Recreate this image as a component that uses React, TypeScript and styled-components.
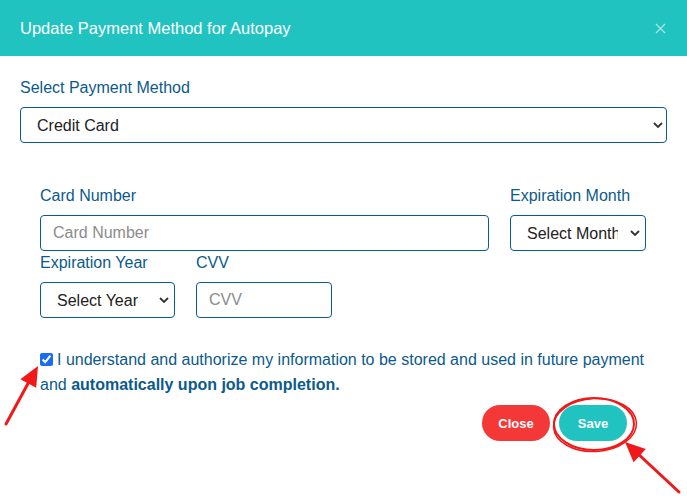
import React, { useState } from 'react';
import styled, { createGlobalStyle } from 'styled-components';

const GlobalStyle = createGlobalStyle`
  html, body {
    margin: 0;
    padding: 0;
    background: #fff;
  }
  body {
    font-family: 'Liberation Sans', Arial, sans-serif;
  }
  * {
    box-sizing: border-box;
  }
`;

const TEAL = '#21c3c1';
const BLUE = '#0b5a8c';

const Modal = styled.div`
  position: relative;
  width: 687px;
  min-height: 501px;
  background: #fff;
`;

const Header = styled.div`
  height: 56px;
  background: ${TEAL};
  display: flex;
  align-items: center;
  justify-content: space-between;
  padding: 0 21px 0 20px;
`;

const Title = styled.h5`
  margin: 0;
  font-size: 16.5px;
  font-weight: 400;
  color: #fff;
`;

const CloseX = styled.button`
  border: 0;
  background: none;
  padding: 0;
  width: 12px;
  height: 12px;
  display: flex;
  align-items: center;
  justify-content: center;
  cursor: pointer;
`;

const Body = styled.div`
  padding: 23px 20px 0;
`;

const Label = styled.label`
  display: block;
  font-size: 16px;
  line-height: 18px;
  color: ${BLUE};
  margin-bottom: 10px;
`;

const SelectWrap = styled.div`
  position: relative;
  width: 100%;
`;

const Select = styled.select<{ $padRight?: number }>`
  appearance: none;
  -webkit-appearance: none;
  width: 100%;
  height: 36px;
  border: 1px solid ${BLUE};
  border-radius: 4px;
  background: #fff;
  font-family: inherit;
  font-size: 16px;
  color: #222;
  padding: 0 ${(p) => p.$padRight ?? 28}px 0 16px;
  outline: none;
`;

const Chevron = styled.svg<{ $right: number }>`
  position: absolute;
  top: 50%;
  right: ${(p) => p.$right}px;
  margin-top: -3px;
  pointer-events: none;
`;

const Input = styled.input`
  width: 100%;
  height: 36px;
  border: 1px solid ${BLUE};
  border-radius: 4px;
  font-family: inherit;
  font-size: 16px;
  color: #222;
  padding: 0 12px;
  outline: none;
  &::placeholder {
    color: #8c8c8c;
  }
`;

const CardSection = styled.div`
  margin-top: 44px;
  padding: 0 20px;
`;

const Row = styled.div`
  display: flex;
  gap: 21px;
`;

const Col = styled.div<{ $width: number }>`
  width: ${(p) => p.$width}px;
  flex: none;
  margin-bottom: 3px;
`;

const Consent = styled.p`
  margin: 26px 0 0;
  font-size: 16px;
  line-height: 25px;
  color: ${BLUE};
  width: 610px;

  input {
    margin: 0 4px 0 0;
    width: 13px;
    height: 13px;
    vertical-align: -1px;
    accent-color: #1a6cf0;
  }
`;

const Actions = styled.div`
  display: flex;
  justify-content: flex-end;
  gap: 9px;
  margin-top: 8px;
  padding-right: 40px;
`;

const Button = styled.button<{ $variant: 'close' | 'save' }>`
  width: 68px;
  height: 36px;
  border: 0;
  border-radius: 18px;
  background: ${(p) => (p.$variant === 'close' ? '#f43838' : TEAL)};
  color: #fff;
  font-family: inherit;
  font-weight: 700;
  font-size: 13px;
  cursor: pointer;
`;

const Annotations = styled.svg`
  position: absolute;
  left: 0;
  top: 0;
  pointer-events: none;
`;

const Caret = ({ right }: { right: number }) => (
  <Chevron $right={right} width="10" height="6" viewBox="0 0 10 6">
    <path d="M1 1l4 4 4-4" fill="none" stroke="#333" strokeWidth="1.8" />
  </Chevron>
);

const months = ['January', 'February', 'March', 'April', 'May', 'June', 'July', 'August', 'September', 'October', 'November', 'December'];
const years = Array.from({ length: 10 }, (_, i) => String(2024 + i));

const App = () => {
  const [agree, setAgree] = useState(true);

  return (
    <Modal>
      <GlobalStyle />
      <Header>
        <Title>Update Payment Method for Autopay</Title>
        <CloseX aria-label="close">
          <svg width="11" height="11" viewBox="0 0 11 11">
            <path d="M1 1l9 9M10 1l-9 9" stroke="rgba(255,255,255,0.6)" strokeWidth="1.4" />
          </svg>
        </CloseX>
      </Header>
      <Body>
        <Label>Select Payment Method</Label>
        <SelectWrap>
          <Select defaultValue="card" $padRight={24}>
            <option value="card">Credit Card</option>
            <option value="ach">Bank Account</option>
          </Select>
          <Caret right={4} />
        </SelectWrap>

        <CardSection>
          <Row>
            <Col $width={449}>
              <Label>Card Number</Label>
              <Input placeholder="Card Number" />
            </Col>
            <Col $width={136}>
              <Label>Expiration Month</Label>
              <SelectWrap>
                <Select defaultValue="" $padRight={27}>
                  <option value="">Select Month</option>
                  {months.map((m) => (
                    <option key={m}>{m}</option>
                  ))}
                </Select>
                <Caret right={6} />
              </SelectWrap>
            </Col>
          </Row>
          <Row>
            <Col $width={135}>
              <Label>Expiration Year</Label>
              <SelectWrap>
                <Select defaultValue="">
                  <option value="">Select Year</option>
                  {years.map((y) => (
                    <option key={y}>{y}</option>
                  ))}
                </Select>
                <Caret right={6} />
              </SelectWrap>
            </Col>
            <Col $width={136}>
              <Label>CVV</Label>
              <Input placeholder="CVV" />
            </Col>
          </Row>

          <Consent>
            <input type="checkbox" checked={agree} onChange={(e) => setAgree(e.target.checked)} />
            I understand and authorize my information to be stored and used in future payment and{' '}
            <b>automatically upon job completion.</b>
          </Consent>
        </CardSection>

        <Actions>
          <Button $variant="close">Close</Button>
          <Button $variant="save">Save</Button>
        </Actions>
      </Body>

      {/* red hand-drawn markup over the screenshot */}
      <Annotations width="687" height="501" viewBox="0 0 687 501">
        <g fill="none" stroke="#f01818" strokeLinecap="round">
          <ellipse cx="594" cy="424" rx="40" ry="26" strokeWidth="2" />
          <ellipse cx="595" cy="425" rx="41.5" ry="26.5" strokeWidth="1.5" transform="rotate(-3 595 425)" />
          <line x1="6" y1="424" x2="31" y2="378" strokeWidth="3" />
          <line x1="679" y1="492" x2="636" y2="452" strokeWidth="3" />
        </g>
        <g fill="#f01818">
          <polygon points="38,366 20.4,379.2 36.2,387.8" />
          <polygon points="625,442 645.8,449 633.6,462.2" />
        </g>
      </Annotations>
    </Modal>
  );
};

export default App;
